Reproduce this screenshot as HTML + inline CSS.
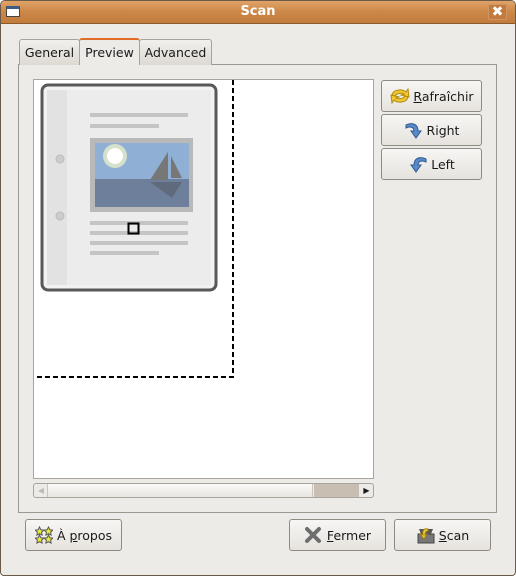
<!DOCTYPE html>
<html><head><meta charset="utf-8"><style>
*{margin:0;padding:0;box-sizing:border-box}
body{width:516px;height:576px;overflow:hidden;background:#fff;font-family:"DejaVu Sans","Liberation Sans",sans-serif;font-size:12.5px;color:#1a1a1a}
.win{position:absolute;left:0;top:0;width:516px;height:576px;background:#edebe8;border:1px solid #6b5a48;border-radius:5px 5px 4px 4px;overflow:hidden}
.title{position:absolute;left:-1px;top:-1px;width:516px;height:24px;background:linear-gradient(#e2a56c,#cc8848 50%,#c27b3c);border-bottom:1px solid #8a5a2c}
.title span{position:absolute;left:0;right:0;top:4px;text-align:center;color:#fff;font-weight:bold;font-size:13px}
.abs{position:absolute}
.tab{position:absolute;top:38px;height:26px;border:1px solid #a7a29a;border-bottom:none;border-radius:3px 3px 0 0;background:linear-gradient(#f2f0ed,#ddd9d3);text-align:center;line-height:25px}
.btn{position:absolute;border:1px solid #8f8a82;border-radius:3px;background:linear-gradient(#f7f6f4,#e6e3de);display:flex;align-items:center;justify-content:center}
.btn u{text-decoration:underline}
</style></head><body>
<div class="win">
<div class="title">
 <div class="abs" style="left:6px;top:6px;width:14px;height:11px;border:1px solid #444;background:#fff;border-top:3px solid #3d5c8a"></div>
 <span>Scan</span>
 <div class="abs" style="left:488px;top:4px;width:19px;height:16px;border:1px solid #fff3;border-radius:2px;background:#c27b3c;color:#fff;font-weight:bold;font-size:14px;text-align:center;line-height:15px">✖</div>
</div>
<div class="abs" style="left:17px;top:63px;width:479px;height:449px;border:1px solid #9d988f;background:#edebe8"></div>
<div class="tab" style="left:18px;width:61px">General</div>
<div class="tab" style="left:138px;width:73px">Advanced</div>
<div class="tab" style="left:78px;width:61px;top:37px;height:27px;background:#edebe8;border-top:2px solid #e06c2a;line-height:25px">Preview</div>
<div class="abs" style="left:32px;top:78px;width:341px;height:400px;background:#fff;border:1px solid #a9a49c;overflow:hidden">
 <svg width="341" height="400" style="position:absolute;left:0;top:0">
  <defs><radialGradient id="sh" cx="50%" cy="0" r="60%"><stop offset="0" stop-color="#777" stop-opacity=".8"/><stop offset="1" stop-color="#fff" stop-opacity="0"/></radialGradient></defs>
  <ellipse cx="95" cy="208" rx="105" ry="26" fill="url(#sh)"/>
  <rect x="8" y="5" width="174" height="205" rx="6" fill="#f2f2f2" stroke="#585858" stroke-width="3"/>
  <rect x="13" y="10" width="164" height="195" fill="#ececec"/>
  <rect x="13" y="10" width="20" height="195" fill="#e2e2e2"/>
  <circle cx="26" cy="79" r="4" fill="#ccc" stroke="#bbb"/>
  <circle cx="26" cy="136" r="4" fill="#ccc" stroke="#bbb"/>
  <rect x="56" y="33" width="98" height="4" fill="#c4c4c4"/>
  <rect x="56" y="44" width="69" height="4" fill="#c4c4c4"/>
  <rect x="56" y="58" width="103" height="74" fill="#b9b9b9"/>
  <rect x="61" y="63" width="94" height="36" fill="#8fb0d4"/>
  <rect x="61" y="99" width="94" height="28" fill="#6d7f9a"/>
  <circle cx="81" cy="76" r="12" fill="#f4f6c8" opacity=".7"/><circle cx="81" cy="76" r="8" fill="#fff"/>
  <path d="M134 72 L134 100 L116 100 Z" fill="#777"/><path d="M137 76 L148 98 L137 98 Z" fill="#777"/>
  <path d="M116 102 L148 102 L138 118 Z" fill="#5f6a7c"/>
  <rect x="56" y="141" width="98" height="4" fill="#c4c4c4"/>
  <rect x="56" y="151" width="98" height="4" fill="#c4c4c4"/>
  <rect x="56" y="161" width="98" height="4" fill="#c4c4c4"/>
  <rect x="56" y="171" width="69" height="4" fill="#c4c4c4"/>
  <rect x="94.5" y="143.5" width="10" height="10" fill="none" stroke="#000" stroke-width="2"/>
  <path d="M199 0 V297 H0" fill="none" stroke="#000" stroke-width="2" stroke-dasharray="5,3"/>
 </svg>
</div>
<div class="abs" style="left:32px;top:482px;width:341px;height:15px;border:1px solid #a9a49c;border-radius:3px;background:#edebe8">
 <div class="abs" style="left:1px;top:1px;width:12px;height:11px;color:#bbb;font-size:8px;line-height:11px;text-align:center">◀</div>
 <div class="abs" style="left:13px;top:0;width:266px;height:13px;border-left:1px solid #c9c4bc;border-right:1px solid #c9c4bc;background:linear-gradient(#fbfaf9,#e8e5e1)"></div>
 <div class="abs" style="left:280px;top:0;width:45px;height:13px;background:#c9beb2"></div>
 <div class="abs" style="left:326px;top:0;width:13px;height:13px;font-size:8px;line-height:13px;text-align:center">▶</div>
</div>
<div class="btn" style="left:380px;top:79px;width:101px;height:32px">
 <svg width="22" height="20" viewBox="0 0 22 20" style="margin-right:2px"><path d="M3 9 A8 6 0 0 1 17 6 L19 3 L20 11 L12 9 L15 8 A6 4 0 0 0 6 10 Z" fill="#f0c830" stroke="#b08a10"/><path d="M19 11 A8 6 0 0 1 5 14 L3 17 L2 9 L10 11 L7 12 A6 4 0 0 0 16 10 Z" fill="#f0c830" stroke="#b08a10"/></svg>
 <span><u>R</u>afraîchir</span></div>
<div class="btn" style="left:380px;top:113px;width:101px;height:32px">
 <svg width="20" height="20" viewBox="0 0 20 20" style="margin-right:3px"><path d="M2 5 C8 2 14 4 14 11 L17 11 L12 18 L7 11 L10 11 C10 7 6 6 2 8 Z" fill="#5a8ac8" stroke="#2e5a94"/></svg>
 <span>Right</span></div>
<div class="btn" style="left:380px;top:147px;width:101px;height:32px">
 <svg width="20" height="20" viewBox="0 0 20 20" style="margin-right:3px"><path d="M18 5 C12 2 6 4 6 11 L3 11 L8 18 L13 11 L10 11 C10 7 14 6 18 8 Z" fill="#5a8ac8" stroke="#2e5a94"/></svg>
 <span>Left</span></div>
<div class="btn" style="left:24px;top:518px;width:97px;height:32px">
 <svg width="18" height="20" viewBox="0 0 18 20" style="margin-right:4px"><g fill="#e8e840" stroke="#555"><path d="M4.5 2l1.3 2.7 3 .4-2.2 2 .5 3-2.6-1.4-2.6 1.4.5-3L.3 5.1l3-.4z"/><path d="M13.5 2l1.3 2.7 3 .4-2.2 2 .5 3-2.6-1.4-2.6 1.4.5-3-2.2-2 3-.4z"/><path d="M4.5 10l1.3 2.7 3 .4-2.2 2 .5 3-2.6-1.4-2.6 1.4.5-3L.3 13.1l3-.4z"/><path d="M13.5 10l1.3 2.7 3 .4-2.2 2 .5 3-2.6-1.4-2.6 1.4.5-3-2.2-2 3-.4z"/></g></svg>
 <span>À <u>p</u>ropos</span></div>
<div class="btn" style="left:288px;top:518px;width:97px;height:32px">
 <svg width="18" height="18" viewBox="0 0 18 18" style="margin-right:5px"><path d="M3 3 L15 15 M15 3 L3 15" stroke="#6e6e6e" stroke-width="4" stroke-linecap="round"/></svg>
 <span><u>F</u>ermer</span></div>
<div class="btn" style="left:393px;top:518px;width:97px;height:32px">
 <svg width="20" height="20" viewBox="0 0 20 20" style="margin-right:3px"><rect x="2" y="9" width="16" height="9" fill="#777" stroke="#444"/><path d="M3 4 H17 L15 9 H5 Z" fill="#555"/><path d="M12 4 C8 3 6 6 7 10 L4 9 L8 14 L11 9 L9 10 C9 7 10 6 12 6 Z" fill="#f0d030" stroke="#a08010"/></svg>
 <span><u>S</u>can</span></div>
</div>
</body></html>
